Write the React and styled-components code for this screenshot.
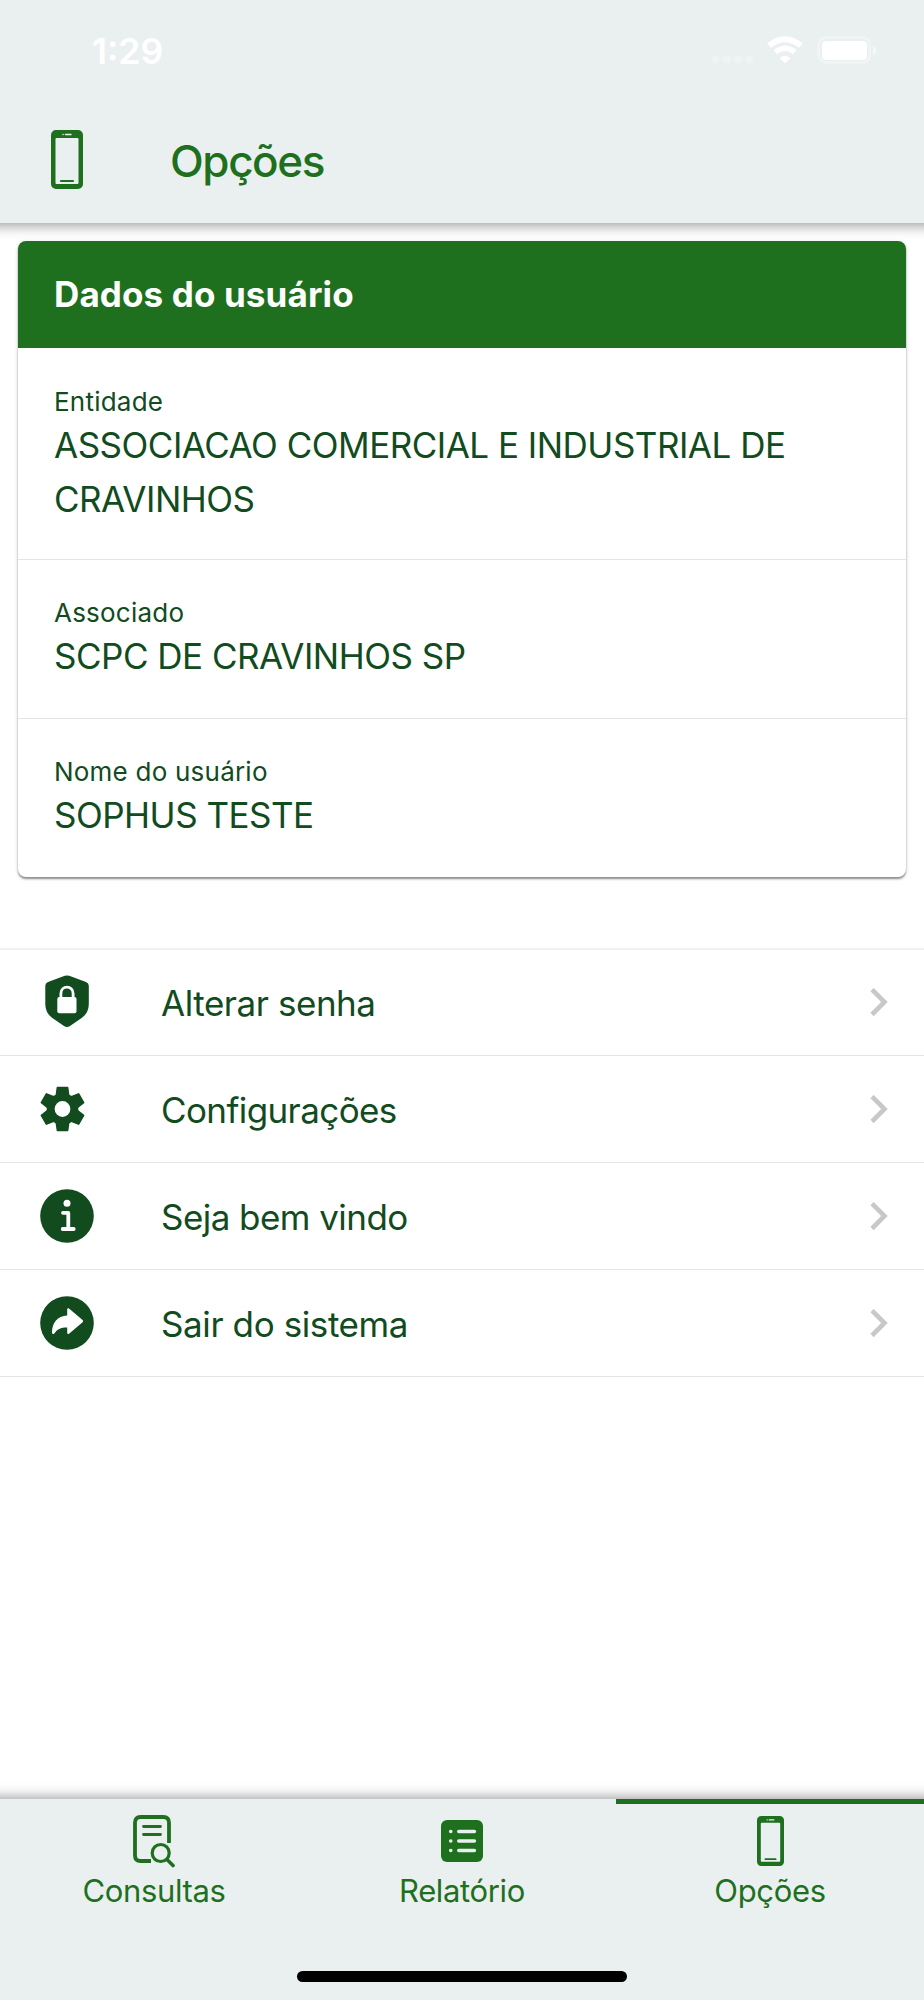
import React from "react";
import styled, { createGlobalStyle } from "styled-components";

const GREEN = "#1e701e";
const DARK_GREEN = "#114b1e";
const BAR = "#eaf0f0";

const userData = [
  { label: "Entidade", value: "ASSOCIACAO COMERCIAL E INDUSTRIAL DE CRAVINHOS" },
  { label: "Associado", value: "SCPC DE CRAVINHOS SP" },
  { label: "Nome do usuário", value: "SOPHUS TESTE" },
];

const menuItems = [
  { text: "Alterar senha", icon: ShieldIcon, spacing: "-0.45px" },
  { text: "Configurações", icon: GearIcon, spacing: "-0.6px" },
  { text: "Seja bem vindo", icon: InfoIcon, spacing: "-0.55px" },
  { text: "Sair do sistema", icon: ExitIcon, spacing: "-0.4px" },
];

const tabs = [
  { text: "Consultas", icon: SearchDocIcon },
  { text: "Relatório", icon: ListIcon },
  { text: "Opções", icon: PhoneIcon, active: true },
];

function PhoneIcon({ width = 27, height = 50 }) {
  return (
    <svg width={width} height={height} viewBox="0 0 32 59">
      <path
        fill={GREEN}
        fillRule="evenodd"
        d="M5 0h22a5 5 0 0 1 5 5v49a5 5 0 0 1-5 5H5a5 5 0 0 1-5-5V5a5 5 0 0 1 5-5zM5.5 8a1 1 0 0 0-1 1v44a1 1 0 0 0 1 1h21a1 1 0 0 0 1-1V9a1 1 0 0 0-1-1z"
      />
      <path stroke={BAR} strokeWidth="1.4" strokeLinecap="round" d="M14.5 4.5h5.5M12 4.5h.1" />
      <path stroke={GREEN} strokeWidth="2.2" strokeLinecap="round" d="M10 51h12" />
    </svg>
  );
}

function SearchDocIcon() {
  return (
    <svg width="42" height="53" viewBox="0 0 42 53" fill="none" stroke={GREEN}>
      <path strokeWidth="3.8" d="M36 28V7.5Q36 2 30.500 2H7.500Q2 2 2 7.500V40.500Q2 46 7.500 46H18" />
      <path strokeWidth="2.8" strokeLinecap="round" d="M10.500 11.500h17M10.500 19.500h17" />
      <circle cx="27.700" cy="38" r="8.500" strokeWidth="3.200" />
      <path strokeWidth="3.600" strokeLinecap="round" d="M34.500 45l5.500 5.500" />
    </svg>
  );
}

function ListIcon() {
  return (
    <svg width="42" height="42" viewBox="0 0 42 42">
      <rect width="42" height="42" rx="6" fill={GREEN} />
      <path
        stroke={BAR}
        strokeWidth="3.600"
        strokeLinecap="round"
        d="M17.800 11.500h15.600M17.800 21h15.600M17.800 30.500h15.600M9.700 11.500h.1M9.700 21h.1M9.700 30.500h.1"
      />
    </svg>
  );
}

function ShieldIcon() {
  return (
    <svg width="54" height="54" viewBox="0 0 54 54">
      <path
        fill={DARK_GREEN}
        d="M24.800 .8Q27 0 29.200 .8L46 6.900Q48.800 7.900 48.800 10.700V29.200Q48.800 37.700 42 42.700L30 50.900Q27 52.900 24 50.900L12 42.700Q5.300 37.700 5.300 29.200V10.700Q5.300 7.900 8 6.900z"
      />
      <path fill="none" stroke="#fff" strokeWidth="2.800" d="M20.900 23V18.500C20.900 10 33.100 10 33.100 18.500V23" />
      <rect x="17.300" y="21.900" width="19.200" height="16.300" rx="2" fill="#fff" />
    </svg>
  );
}

function GearIcon() {
  return (
    <svg width="54" height="54" viewBox="0 0 54 54">
      <g fill={DARK_GREEN} transform="translate(22.500 27)">
        <circle r="15.800" />
        {[0, 60, 120, 180, 240, 300].map((angle) => (
          <path key={angle} transform={`rotate(${angle})`} d="M-5-22.300h10q.8 0 .9.800L7.200-12H-7.200L-5.900-21.500q.1-.8.900-.8z" />
        ))}
        <circle r="7.900" fill="#fff" />
      </g>
    </svg>
  );
}

function InfoIcon() {
  return (
    <svg width="54" height="54" viewBox="0 0 54 54">
      <circle cx="27" cy="27" r="26.800" fill={DARK_GREEN} />
      <circle cx="27" cy="14.300" r="3.500" fill="#fff" />
      <path fill="none" stroke="#fff" strokeWidth="3.800" strokeLinecap="round" strokeLinejoin="round" d="M23 23.800h5.300V40M22.700 40h11" />
    </svg>
  );
}

function ExitIcon() {
  return (
    <svg width="54" height="54" viewBox="0 0 54 54">
      <circle cx="27" cy="27" r="26.800" fill={DARK_GREEN} />
      <path
        fill="#fff"
        d="M27.200 19.600V13.600Q27.300 11.600 29 12.500L42.600 24Q43.700 25.100 42.600 26.200L29 37.800Q27.300 38.700 27.200 36.800V31.500C20.500 31.500 17 33.500 14.500 37.200Q12.300 39.300 12 36.500C12 27 17.500 20 27.200 19.600z"
      />
    </svg>
  );
}

function StatusIcons() {
  return (
    <svg width="168" height="30" viewBox="0 0 168 30">
      <g fill="#fff" opacity="0.2">
        <circle cx="5.500" cy="23.500" r="4" />
        <circle cx="16.700" cy="23.500" r="4" />
        <circle cx="28" cy="23.500" r="4" />
        <circle cx="39.200" cy="23.500" r="4" />
      </g>
      <g fill="none" stroke="#fff">
        <path strokeWidth="5.800" d="M59 9.600Q75 -3.200 91 9.600" />
        <path strokeWidth="5.400" d="M65.300 16.200Q75 8.300 84.700 16.200" />
      </g>
      <path fill="#fff" d="M69.700 22.200Q75 17.500 80.300 22.200L75 27.200z" />
      <rect x="108.800" y="1.500" width="51" height="25" rx="7" fill="none" stroke="#fff" strokeWidth="2.500" opacity="0.350" />
      <rect x="112" y="5" width="45" height="19" rx="4" fill="#fff" />
      <path fill="#fff" opacity="0.450" d="M163 9.500q3.300 1.200 3.300 5t-3.300 5z" />
    </svg>
  );
}

function App() {
  return (
    <StScreen>
      <GlobalStyle />
      <StHeader>
        <StStatusBar>
          <StClock>1:29</StClock>
          <StatusIcons />
        </StStatusBar>
        <StToolbar>
          <PhoneIcon width={32} height={59} />
          <StTitle>Opções</StTitle>
        </StToolbar>
      </StHeader>
      <StContent>
        <StCard>
          <StCardHeader>Dados do usuário</StCardHeader>
          {userData.map(({ label, value }) => (
            <StField key={label}>
              <StLabel>{label}</StLabel>
              <StValue>{value}</StValue>
            </StField>
          ))}
        </StCard>
        <StMenu>
          {menuItems.map(({ text, icon: Icon, spacing }) => (
            <StMenuItem key={text}>
              <Icon />
              <StMenuText $spacing={spacing}>{text}</StMenuText>
              <svg width="18" height="29" viewBox="0 0 18 29">
                <path fill="none" stroke="#c8c8c8" strokeWidth="4.600" d="M2 1.500L14.500 14L2 26.500" />
              </svg>
            </StMenuItem>
          ))}
        </StMenu>
      </StContent>
      <StTabBar>
        <StTabs>
          {tabs.map(({ text, icon: Icon, active }) => (
            <StTab key={text} $active={active}>
              <div className="icon">
                <Icon />
              </div>
              <span>{text}</span>
            </StTab>
          ))}
        </StTabs>
        <StHomeIndicator />
      </StTabBar>
    </StScreen>
  );
}

const GlobalStyle = createGlobalStyle`
  body {
    margin: 0;
    background-color: #fff;
  }
  * {
    box-sizing: border-box;
  }
  svg {
    display: block;
    flex-shrink: 0;
  }
`;

const StScreen = styled.div`
  display: flex;
  flex-direction: column;
  width: 924px;
  height: 2000px;
  overflow: hidden;
  background-color: #fff;
  font-family: Inter, "Liberation Sans", sans-serif;
  color: ${DARK_GREEN};
`;

const StHeader = styled.header`
  height: 223px;
  background-color: ${BAR};
  box-shadow: 0 -9px 12px 12px rgba(0, 0, 0, 0.38);
`;

const StStatusBar = styled.div`
  display: flex;
  justify-content: space-between;
  align-items: center;
  height: 102px;
  padding: 0 46px 0 92px;
  color: #fff;
`;

const StClock = styled.span`
  font-size: 35.5px;
  font-weight: 600;
`;

const StToolbar = styled.div`
  display: flex;
  align-items: center;
  height: 115px;
  padding-left: 51px;
`;

const StTitle = styled.h1`
  margin: 0 0 0 87px;
  padding-top: 2px;
  font-size: 44px;
  font-weight: 500;
  letter-spacing: -1.4px;
  color: ${GREEN};
`;

const StContent = styled.main`
  flex: 1;
  padding-top: 18px;
`;

const StCard = styled.section`
  margin: 0 18px;
  height: 636px;
  border-radius: 8px;
  overflow: hidden;
  background-color: #fff;
  box-shadow: 0 2px 2px rgba(0, 0, 0, 0.4), 0 1px 5px rgba(0, 0, 0, 0.12);
`;

const StCardHeader = styled.h2`
  display: flex;
  align-items: center;
  height: 107px;
  margin: 0;
  padding: 0 0 1px 36px;
  background-color: ${GREEN};
  font-size: 35px;
  font-weight: 700;
  letter-spacing: 0.12px;
  color: #fff;
`;

const StField = styled.div`
  padding: 37px 36px 33px;
  & + & {
    padding: 36px 36px 34px;
    border-top: 1px solid #e4e4e4;
  }
`;

const StLabel = styled.div`
  font-size: 26px;
  line-height: 34px;
  letter-spacing: 0.22px;
`;

const StValue = styled.div`
  font-size: 35px;
  line-height: 53.5px;
  letter-spacing: -0.5px;
`;

const StMenu = styled.nav`
  margin-top: 71px;
  border-top: 2px solid #f0f0f0;
`;

const StMenuItem = styled.a`
  display: flex;
  align-items: center;
  height: 107px;
  padding: 0 36px 0 40px;
  border-bottom: 1px solid #e4e4e4;
  &:first-child {
    height: 106px;
    padding-bottom: 1px;
  }
`;

const StMenuText = styled.span`
  flex: 1;
  margin-left: 67px;
  padding-top: 2px;
  font-size: 35px;
  letter-spacing: ${({ $spacing }) => $spacing};
`;

const StTabBar = styled.footer`
  height: 201px;
  background-color: ${BAR};
  box-shadow: 0 10px 12px 12px rgba(0, 0, 0, 0.38);
`;

const StTabs = styled.div`
  display: grid;
  grid-template-columns: repeat(3, 1fr);
  height: 172px;
`;

const StTab = styled.div`
  display: flex;
  flex-direction: column;
  align-items: center;
  border-top: 5px solid ${({ $active }) => ($active ? GREEN : "transparent")};
  font-size: 31px;
  line-height: 38px;
  letter-spacing: -0.35px;
  color: ${GREEN};
  .icon {
    display: flex;
    align-items: center;
    height: 68px;
    padding-top: 6px;
  }
`;

const StHomeIndicator = styled.div`
  width: 330px;
  height: 11px;
  margin: 0 auto;
  border-radius: 6px;
  background-color: #000;
`;

export default App;
